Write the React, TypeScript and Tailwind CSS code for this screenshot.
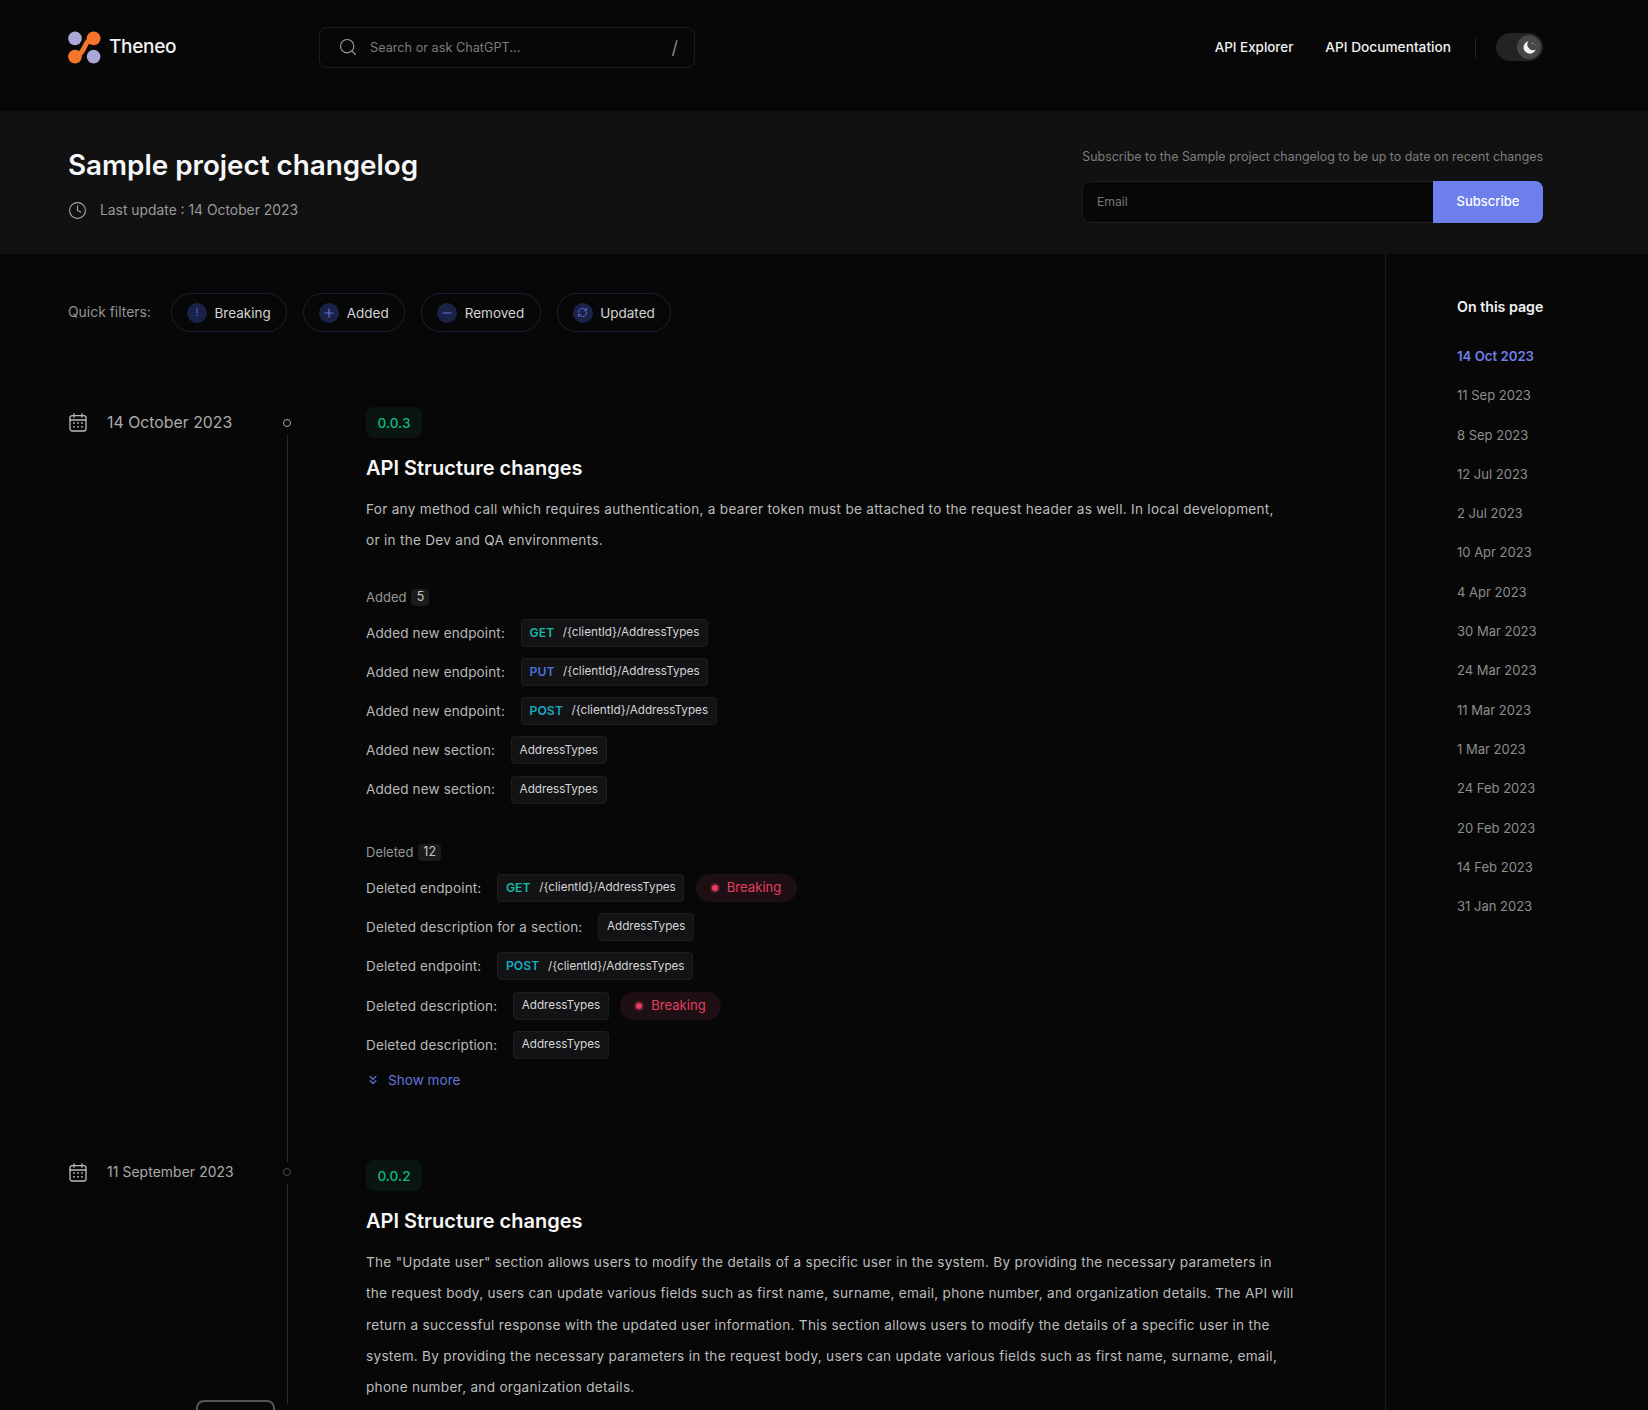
import { Search, Clock, Plus, Minus, RefreshCw, ChevronsDown } from "lucide-react";

function Logo() {
  return (
    <svg width="33" height="33" viewBox="0 0 33 33" className="shrink-0">
      <circle cx="7" cy="7.4" r="6.8" fill="#a9a8d9" />
      <circle cx="25.6" cy="25.6" r="6.8" fill="#a9a8d9" />
      <circle cx="25.6" cy="7.4" r="6.9" fill="#f4752b" />
      <circle cx="7" cy="25.6" r="6.9" fill="#f4752b" />
      <path d="M25.6 7.4C19 9 18 13 16.3 16.5C14.6 20 13 24 7 25.6" fill="none" stroke="#f4752b" strokeWidth="5" />
    </svg>
  );
}

function CalendarIcon() {
  return (
    <svg width="18" height="19" viewBox="0 0 18 19" fill="none" stroke="#bbbbbb" strokeWidth="1.3" className="ml-[1px] shrink-0">
      <rect x="1" y="2.6" width="16" height="15.4" rx="2.2" />
      <path d="M1 7h16M5 0.8v3.4M13 0.8v3.4" strokeLinecap="round" />
      <g fill="#bbbbbb" stroke="none">
        <rect x="4.2" y="9.2" width="1.6" height="1.6" />
        <rect x="8.2" y="9.2" width="1.6" height="1.6" />
        <rect x="12.2" y="9.2" width="1.6" height="1.6" />
        <rect x="4.2" y="13" width="1.6" height="1.6" />
        <rect x="8.2" y="13" width="1.6" height="1.6" />
        <rect x="12.2" y="13" width="1.6" height="1.6" />
      </g>
    </svg>
  );
}

function Chip({ method, color, text }: { method?: string; color?: string; text: string }) {
  return (
    <span className="flex h-[28px] items-center gap-[8.5px] rounded-[4px] border border-[#1d1d1f] bg-[#131315] px-[7.5px] text-[11.7px] text-[#d6d6d6]">
      {method && <span className={`text-[12.2px] font-semibold tracking-[0.1px] ${color}`}>{method}</span>}
      <span>{text}</span>
    </span>
  );
}

function Breaking() {
  return (
    <span className="flex h-[28px] w-[101px] items-center rounded-full bg-[#1d0f13] pl-[16px] text-[13.1px] text-[#e53e62]">
      <span className="mr-[9px] h-[6px] w-[6px] rounded-full bg-[#e53e62] shadow-[0_0_0_2px_#5a1a2a]" />
      Breaking
    </span>
  );
}

type RowT = { label: string; method?: string; color?: string; text: string; breaking?: boolean };

function Row({ label, method, color, text, breaking }: RowT) {
  return (
    <div className="flex h-[28px] items-center">
      <span className="mr-[16px] text-[13.5px] tracking-[0.14px] text-[#b8b8b8]">{label}</span>
      <Chip method={method} color={color} text={text} />
      {breaking && <span className="ml-[11.5px]"><Breaking /></span>}
    </div>
  );
}

function Group({ title, count, rows }: { title: string; count: number; rows: RowT[] }) {
  return (
    <div>
      <div className="flex h-[17px] items-center gap-[5px] text-[13px] text-[#969696]">
        {title}
        <span className="flex h-[17px] min-w-[18px] items-center justify-center rounded-[4px] bg-[#1b1b1c] px-[5px] text-[12.4px] text-[#c4c4c4]">{count}</span>
      </div>
      <div className="mt-[13px] flex flex-col gap-[11.2px]">
        {rows.map((r, i) => <Row key={i} {...r} />)}
      </div>
    </div>
  );
}

function Version({ v }: { v: string }) {
  return (
    <span className="flex h-[31px] w-[56px] items-center justify-center rounded-[8px] bg-[#0a1512] pt-[1px] text-[13.6px] font-medium text-[#10b981]">{v}</span>
  );
}

function Para({ lines }: { lines: string[] }) {
  return (
    <p className="mt-[11.5px] w-[927px] whitespace-nowrap text-[13.6px] leading-[31.4px] tracking-[0.28px] text-[#bcbcbc]">
      {lines.map((l, i) => <span key={i} className="block">{l}</span>)}
    </p>
  );
}

const GET = "text-[#14b8a6]";
const PUT = "text-[#4f6fdc]";
const POST = "text-[#17a9c2]";
const P = "/{clientId}/AddressTypes";
const A = "AddressTypes";

const added: RowT[] = [
  { label: "Added new endpoint:", method: "GET", color: GET, text: P },
  { label: "Added new endpoint:", method: "PUT", color: PUT, text: P },
  { label: "Added new endpoint:", method: "POST", color: POST, text: P },
  { label: "Added new section:", text: A },
  { label: "Added new section:", text: A },
];
const deleted: RowT[] = [
  { label: "Deleted endpoint:", method: "GET", color: GET, text: P, breaking: true },
  { label: "Deleted description for a section:", text: A },
  { label: "Deleted endpoint:", method: "POST", color: POST, text: P },
  { label: "Deleted description:", text: A, breaking: true },
  { label: "Deleted description:", text: A },
];

const dates = ["11 Sep 2023", "8 Sep 2023", "12 Jul 2023", "2 Jul 2023", "10 Apr 2023", "4 Apr 2023", "30 Mar 2023", "24 Mar 2023", "11 Mar 2023", "1 Mar 2023", "24 Feb 2023", "20 Feb 2023", "14 Feb 2023", "31 Jan 2023"];

const filters = [
  { label: "Breaking", icon: <span className="text-[11px] leading-none text-[#4a5fd0]">!</span> },
  { label: "Added", icon: <Plus size={14} strokeWidth={2} className="text-[#6377e0]" /> },
  { label: "Removed", icon: <Minus size={14} strokeWidth={2} className="text-[#6377e0]" /> },
  { label: "Updated", icon: <RefreshCw size={11} strokeWidth={2} className="text-[#5a6ed8]" /> },
];

export default function App() {
  return (
    <div className="relative h-[1410px] overflow-hidden bg-[#070708] font-[Inter,sans-serif] text-white">
      <header className="flex h-[111px] items-center pb-[17px] pl-[68px] pr-[105px]">
        <div className="flex w-[251px] items-center gap-[8px]">
          <Logo />
          <span className="pt-[1px] text-[19px] font-medium tracking-[-0.3px] text-[#f2f2f2]">Theneo</span>
        </div>
        <div className="flex h-[41px] w-[376px] items-center rounded-[8px] border border-[#1c1c1f] pl-[18px] pr-[16px] text-[12.7px] text-[#7c7c7c]">
          <Search size={20} strokeWidth={1.4} className="text-[#a0a0a0]" />
          <span className="ml-[12px] flex-1 pt-[1px]">Search or ask ChatGPT...</span>
          <span className="text-[18px] text-[#888]">/</span>
        </div>
        <nav className="ml-auto flex items-center text-[13.7px] font-medium text-[#f0f0f0]">
          <span className="text-[13.4px]">API Explorer</span>
          <span className="ml-[32px]">API Documentation</span>
          <span className="ml-[24px] h-[21px] w-px bg-[#222]" />
          <span className="ml-[20px] flex h-[28px] w-[47px] items-center justify-end rounded-full border border-[#262626] bg-[#232325] pr-[1px]">
            <span className="flex h-[24px] w-[24px] items-center justify-center rounded-full bg-[#47474a]">
              <svg width="15" height="15" viewBox="0 0 15 15">
                <path d="M6.5 1.2a6.3 6.3 0 1 0 7.3 8.2A5.6 5.6 0 0 1 6.5 1.2z" fill="#f3f3f3" />
                <circle cx="10.5" cy="3" r="0.6" fill="#ddd" />
                <circle cx="13" cy="4.6" r="0.45" fill="#ccc" />
              </svg>
            </span>
          </span>
        </nav>
      </header>

      <section className="flex h-[143px] justify-between bg-[#111112] pl-[68px] pr-[105px]">
        <div>
          <h1 className="mt-[36px] text-[27.8px] font-semibold leading-[36px] text-[#f7f7f7]">Sample project changelog</h1>
          <div className="mt-[17px] flex items-center gap-[13px] text-[13.85px] text-[#9a9a9a]">
            <Clock size={19} strokeWidth={1.4} className="text-[#a6a6a6]" />
            <span>Last update : 14 October 2023</span>
          </div>
        </div>
        <div className="w-[461px]">
          <p className="mt-[36px] h-[20px] whitespace-nowrap text-right text-[12.4px] leading-[20px] text-[#7e7e7e]">Subscribe to the Sample project changelog to be up to date on recent changes</p>
          <div className="mt-[14px] flex h-[42px]">
            <div className="flex flex-1 items-center rounded-l-[8px] border border-r-0 border-[#1c1c1e] bg-[#070708] pl-[14px] text-[12.2px] text-[#777]">Email</div>
            <button className="w-[110px] rounded-r-[8px] bg-[#6c7fec] text-[13px] font-medium text-white">Subscribe</button>
          </div>
        </div>
      </section>

      <div className="flex">
        <main className="w-[1385px] shrink-0">
          <div className="flex items-center pl-[68px] pt-[39px]">
            <span className="mr-[21px] w-[82px] whitespace-nowrap text-[13.9px] text-[#949494]">Quick filters:</span>
            <div className="flex gap-[16px]">
              {filters.map((f) => (
                <span key={f.label} className="flex h-[39px] items-center gap-[7.5px] rounded-full border border-[#1a2035] pl-[15px] pr-[15.5px] text-[13.5px] text-[#d4d4d4]">
                  <span className="flex h-[20px] w-[20px] items-center justify-center rounded-full bg-[#1a2247]">{f.icon}</span>
                  <span className="pt-[1px]">{f.label}</span>
                </span>
              ))}
            </div>
          </div>

          <div className="mt-[75px] flex pl-[68px]">
            <div className="flex w-[298px] shrink-0">
              <div className="flex h-[31px] w-[215px] items-center gap-[20px]">
                <CalendarIcon />
                <span className="pt-[1px] text-[15.85px] text-[#ababab]">14 October 2023</span>
              </div>
              <div className="flex w-[8px] flex-col items-center">
                <span className="mt-[12px] h-[8px] w-[8px] rounded-full border border-[#a8a8a8]" />
                <span className="-mb-[2px] mt-[8px] w-px flex-1 bg-[#2a2a2b]" />
              </div>
            </div>
            <div className="pb-[70px]">
              <Version v="0.0.3" />
              <h2 className="mt-[16px] text-[20px] font-semibold leading-[28px] text-[#f8f8f8]">API Structure changes</h2>
              <Para lines={[
                "For any method call which requires authentication, a bearer token must be attached to the request header as well. In local development,",
                "or in the Dev and QA environments.",
              ]} />
              <div className="mt-[32.5px]"><Group title="Added" count={5} rows={added} /></div>
              <div className="mt-[40.5px]"><Group title="Deleted" count={12} rows={deleted} /></div>
              <div className="mt-[11.4px] flex h-[20px] items-center gap-[8px] text-[13.6px] text-[#6173dd]">
                <ChevronsDown size={14} strokeWidth={2.2} />
                <span>Show more</span>
              </div>
            </div>
          </div>

          <div className="flex pl-[68px]">
            <div className="flex w-[298px] shrink-0">
              <div className="flex h-[24px] w-[215px] items-center gap-[20px]">
                <CalendarIcon />
                <span className="text-[13.85px] tracking-[0.1px] text-[#ababab]">11 September 2023</span>
              </div>
              <div className="flex w-[8px] flex-col items-center">
                <span className="mt-[8px] h-[8px] w-[8px] rounded-full border border-[#4a4a4a]" />
                <span className="mt-[8px] w-px flex-1 bg-[#2a2a2b]" />
              </div>
            </div>
            <div>
              <Version v="0.0.2" />
              <h2 className="mt-[16px] text-[20px] font-semibold leading-[28px] text-[#f8f8f8]">API Structure changes</h2>
              <Para lines={[
                'The "Update user" section allows users to modify the details of a specific user in the system. By providing the necessary parameters in',
                "the request body, users can update various fields such as first name, surname, email, phone number, and organization details. The API will",
                "return a successful response with the updated user information. This section allows users to modify the details of a specific user in the",
                "system. By providing the necessary parameters in the request body, users can update various fields such as first name, surname, email,",
                "phone number, and organization details.",
              ]} />
            </div>
          </div>
        </main>

        <aside className="min-h-[1156px] flex-1 border-l border-[#1d1d1e] pl-[71px] pt-[43px]">
          <div className="h-[20px] text-[14.2px] font-semibold leading-[20px] text-[#f2f2f2]">On this page</div>
          <ul className="mt-[29px] flex flex-col gap-[19.3px] text-[13px] leading-[20px] text-[#8d8d8d]">
            <li className="text-[13.2px] font-semibold text-[#7080e8]">14 Oct 2023</li>
            {dates.map((d) => <li key={d}>{d}</li>)}
          </ul>
        </aside>
      </div>

      <div className="absolute left-[196px] top-[1400px] h-[40px] w-[79px] rounded-[8px] border-2 border-[#555] bg-[#070708]" />
    </div>
  );
}
